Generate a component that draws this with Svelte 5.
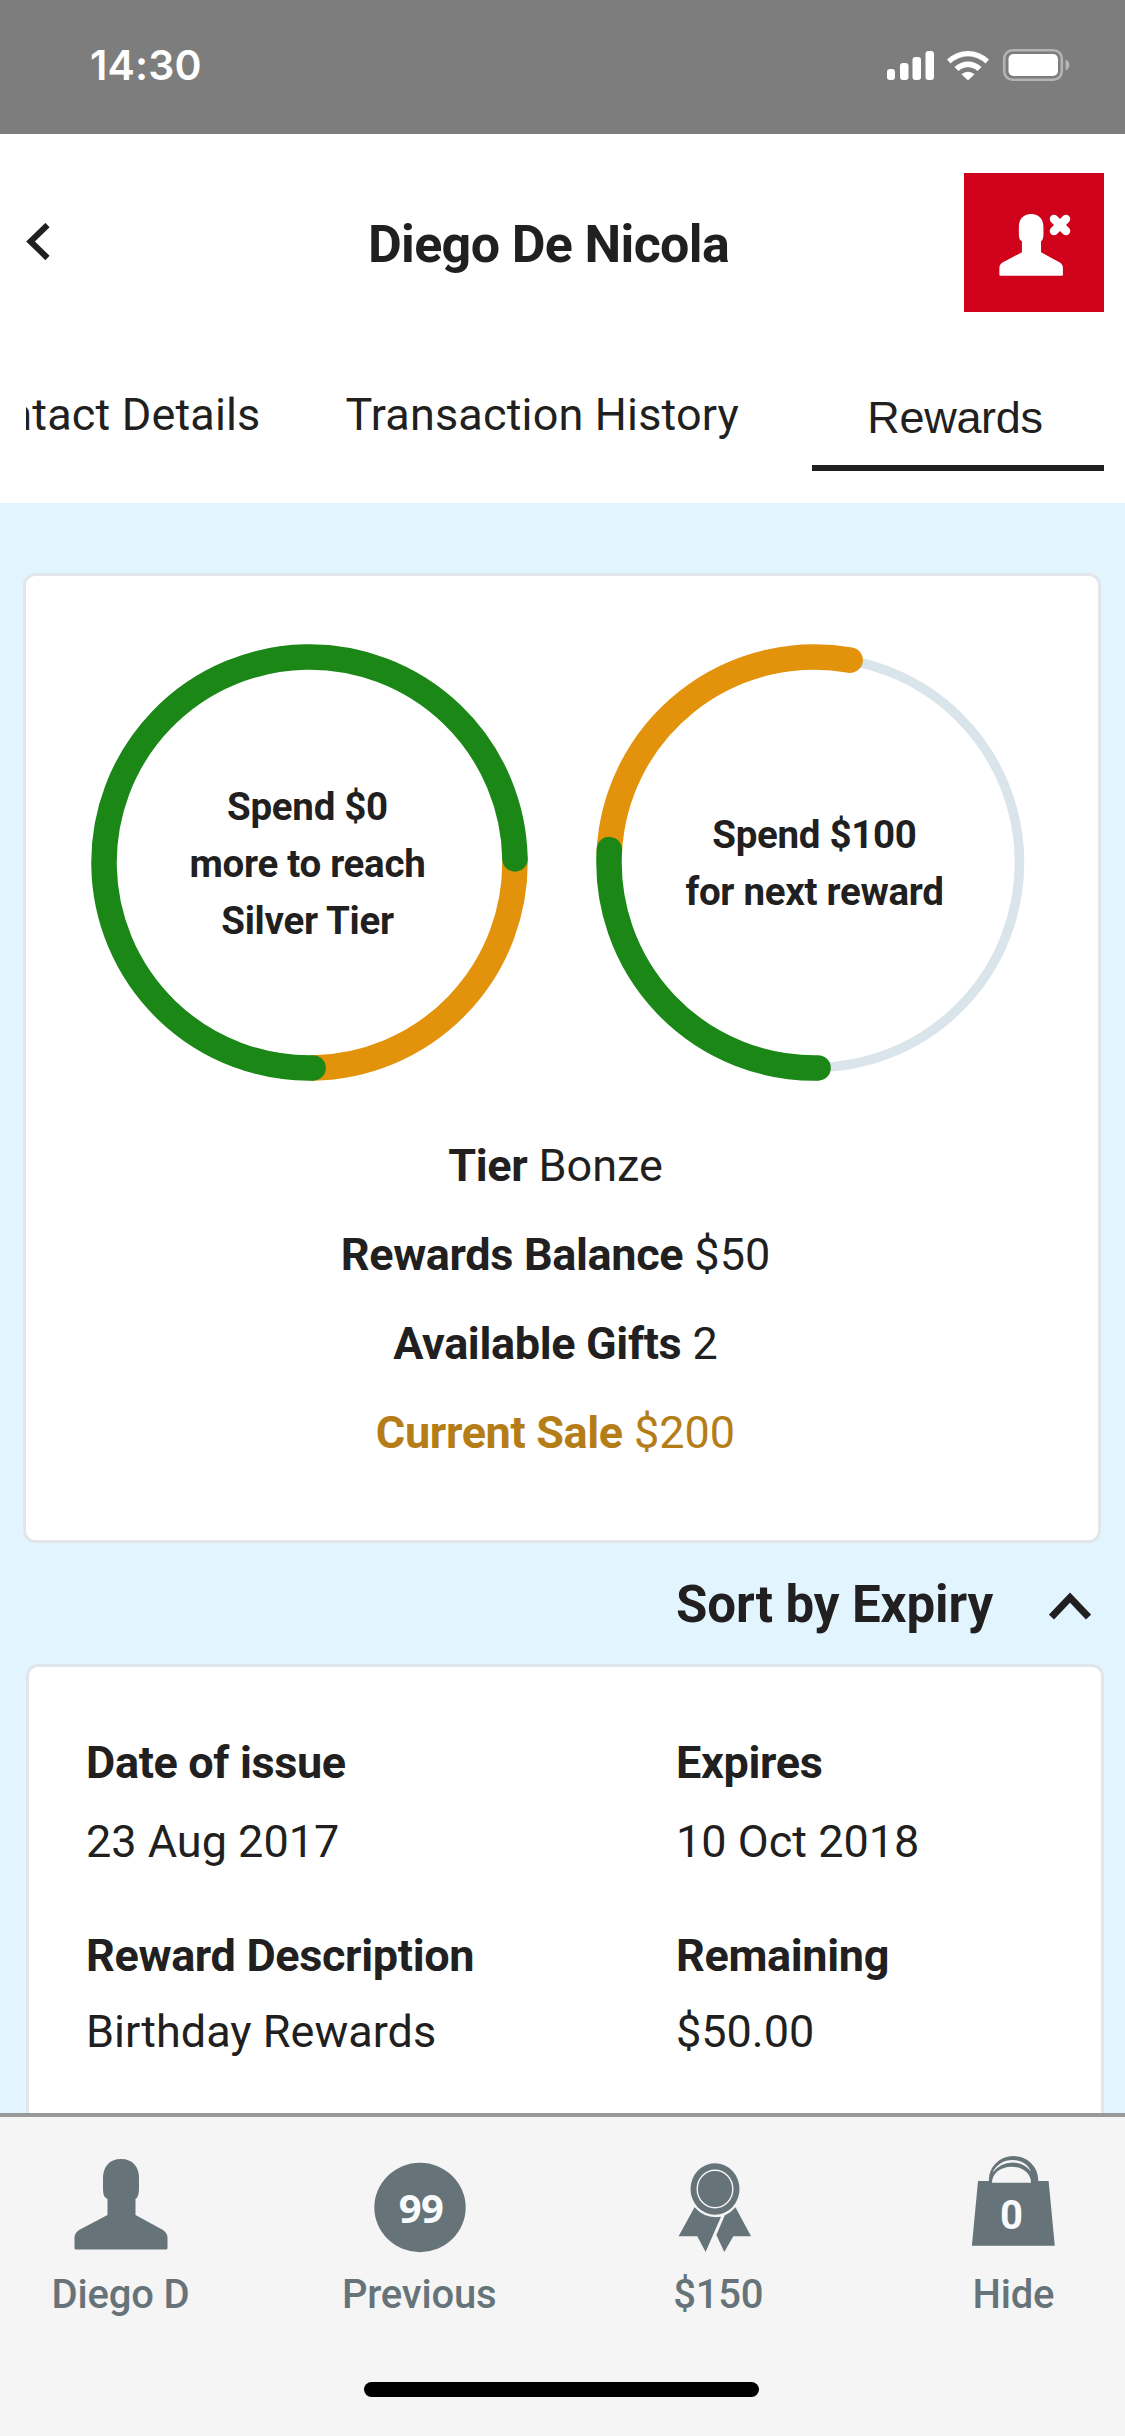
<script lang="ts">
	const tabs = ['Contact Details', 'Transaction History', 'Rewards'];
	let active = $state('Rewards');
	let ascending = $state(true);

	// arcs are drawn clockwise, angles in degrees, 0 = top
	const R = 205.5;
	const C = 218.5;
	function arc(from: number, to: number) {
		const point = (deg: number) => {
			const a = (deg * Math.PI) / 180;
			return `${(C + R * Math.sin(a)).toFixed(2)} ${(C - R * Math.cos(a)).toFixed(2)}`;
		};
		return `M${point(from)}A${R} ${R} 0 ${to - from > 180 ? 1 : 0} 1 ${point(to)}`;
	}

	const charts = [
		{
			lines: ['Spend $0', 'more to reach', 'Silver Tier'],
			sale: arc(89, 179),
			spent: arc(179, 449)
		},
		{
			lines: ['Spend $100', 'for next reward'],
			sale: arc(273, 370),
			spent: arc(179, 273.6)
		}
	];

	const stats = [
		{ label: 'Tier', value: 'Bonze' },
		{ label: 'Rewards Balance', value: '$50' },
		{ label: 'Available Gifts', value: '2' },
		{ label: 'Current Sale', value: '$200', sale: true }
	];

	const reward = [
		{ label: 'Date of issue', value: '23 Aug 2017' },
		{ label: 'Expires', value: '10 Oct 2018' },
		{ label: 'Reward Description', value: 'Birthday Rewards' },
		{ label: 'Remaining', value: '$50.00' }
	];
</script>

{#snippet person()}
	<path d="M50 3C62 3 68 11 68 22V32C68 38 67 41.500 64.500 43V59L92 74Q96.500 77 96.500 82V92Q96.500 93.500 95 93.500H5Q3.500 93.500 3.500 92V82Q3.500 77 8 74L36.500 59V43C33 41.500 32 38 32 32V22C32 11 38 3 50 3Z" />
{/snippet}

<div class="screen">
	<div class="status">
		<span class="time">14:30</span>
		<svg width="184" height="34" viewBox="0 0 184 34" fill="#fff">
			<rect x="1" y="21" width="8" height="11" rx="3" />
			<rect x="14" y="15" width="8.500" height="17" rx="3" />
			<rect x="26.500" y="9" width="8.500" height="23" rx="3" />
			<rect x="39.500" y="3" width="8.500" height="29" rx="3" />
			<path d="M61 11.500A30 30 0 0 1 103 11.500L99.500 15.500A25 25 0 0 0 64.500 15.500Z" />
			<path d="M68.500 19A19.500 19.500 0 0 1 95.500 19L91.500 23A14 14 0 0 0 72.500 23Z" />
			<path d="M75.500 26.200A9.500 9.500 0 0 1 88.500 26.200L82 32.500Z" />
			<rect x="118.200" y="2.200" width="57.600" height="29.600" rx="8.500" fill="none" stroke="#b4b4b4" stroke-width="2.600" />
			<rect x="122.500" y="6" width="49.500" height="22" rx="5" />
			<path d="M179.500 11.500Q183.500 13 183.500 17T179.500 22.500Z" fill="#b4b4b4" />
		</svg>
	</div>

	<header>
		<button class="back" aria-label="Back">
			<svg width="26" height="40" viewBox="0 0 26 40" fill="none" stroke="#221f20" stroke-width="6">
				<path d="M21.500 2L4.500 18.500L21.500 35" />
			</svg>
		</button>
		<h1>Diego De Nicola</h1>
		<button class="remove" aria-label="Remove customer">
			<svg width="76" height="66" viewBox="0 0 76 66" fill="#fff">
				<g transform="scale(.683)">{@render person()}</g>
				<path d="M57 7L69 19M69 7L57 19" stroke="#fff" stroke-width="8.500" stroke-linecap="round" />
			</svg>
		</button>
	</header>

	<nav>
		{#each tabs as tab}
			<button class:active={tab === active} onclick={() => (active = tab)}>{tab}</button>
		{/each}
	</nav>

	<main>
		<section class="card summary">
			<div class="charts">
				{#each charts as chart, i}
					<div class="chart">
						<svg width="437" height="437" viewBox="0 0 437 437" fill="none" stroke-linecap="round">
							{#if i > 0}
								<circle cx={C} cy={C} r="205" stroke="#d9e4eb" stroke-width="9.500" />
							{/if}
							<path d={chart.sale} stroke="#e3920b" stroke-width="25.500" />
							<path d={chart.spent} stroke="#1a8717" stroke-width="25.500" />
						</svg>
						<p>
							{#each chart.lines as line}
								<span>{line}</span>
							{/each}
						</p>
					</div>
				{/each}
			</div>
			<div class="stats">
				{#each stats as stat}
					<div class:sale={stat.sale}><b>{stat.label}</b> {stat.value}</div>
				{/each}
			</div>
		</section>

		<button class="sort" onclick={() => (ascending = !ascending)}>
			Sort by Expiry
			<svg class:flipped={!ascending} width="42" height="30" viewBox="0 0 42 30" fill="none" stroke="#221f20" stroke-width="7">
				<path d="M2.500 27L21 7.500L39.500 27" />
			</svg>
		</button>

		<section class="card reward">
			{#each reward as field}
				<div class="field">
					<b>{field.label}</b>
					<span>{field.value}</span>
				</div>
			{/each}
		</section>
	</main>

	<footer>
		<div class="actions">
			<button>
				<svg width="100" height="100" viewBox="0 0 100 100">{@render person()}</svg>
				Diego D
			</button>
			<button>
				<svg width="100" height="100" viewBox="0 0 100 100">
					<ellipse cx="51" cy="51.500" rx="45.700" ry="44.700" />
					<text class="count" x="52" y="67">99</text>
				</svg>
				Previous
			</button>
			<button>
				<svg width="100" height="100" viewBox="0 0 100 100">
					<ellipse cx="47" cy="33" rx="24.500" ry="25.800" />
					<ellipse cx="47" cy="33" rx="17.800" ry="18.800" fill="none" stroke="#f5f5f5" stroke-width="1.400" />
					<path d="M26.500 51.300A29.500 29.500 0 0 0 53 60.700L37.600 96L29.300 80.300H10.600Z" />
					<path d="M67.500 51.300A29.500 29.500 0 0 1 56.700 59.500L48.400 79L56.300 96L65.300 80.300H83Z" />
				</svg>
				$150
			</button>
			<button>
				<svg width="100" height="100" viewBox="-1 0 100 100">
					<path d="M14 25H24.800V24A24.700 24 0 0 1 74.200 24V25H84.600L90.800 89.700H7.900Z" />
					<path d="M28 26.700C28 17 37 10.700 47.500 10.700S67 17 67 26.700Z" fill="#f5f5f5" />
					<path d="M28.500 16.500Q35 4 48.500 4T67.500 16Q60 6.500 48.500 6.500T28.500 16.500Z" fill="#f5f5f5" />
					<text class="items" x="47.500" y="73">0</text>
				</svg>
				Hide
			</button>
		</div>
		<div class="home"></div>
	</footer>
</div>

<style>
	:global(body) {
		margin: 0;
	}
	.screen {
		width: 1125px;
		height: 2436px;
		overflow: hidden;
		display: flex;
		flex-direction: column;
		background: #fff;
		color: #221f20;
		font-family: Roboto, sans-serif;
		font-size: 45px;
	}
	button {
		all: unset;
		box-sizing: border-box;
		cursor: pointer;
	}
	svg {
		display: block;
	}
	b {
		letter-spacing: -0.35px;
	}

	.status {
		flex: none;
		height: 134px;
		box-sizing: border-box;
		padding: 0 55px 4px 90px;
		display: flex;
		align-items: center;
		justify-content: space-between;
		background: #7d7d7d;
	}
	.time {
		color: #fff;
		font: 600 41px/50px Inter, sans-serif;
		letter-spacing: 0.2px;
	}

	header {
		flex: none;
		height: 217px;
		padding: 0 21px 0 26px;
		display: grid;
		grid-template-columns: 107px 1fr 140px;
		align-items: center;
	}
	h1 {
		margin: 0;
		padding-top: 4px;
		font-size: 52px;
		line-height: 60px;
		font-weight: 700;
		letter-spacing: -0.65px;
		text-align: center;
	}
	.remove {
		height: 139px;
		padding: 4px 0 0 1px;
		display: flex;
		align-items: center;
		justify-content: center;
		background: #d0021b;
	}

	nav {
		flex: none;
		height: 120px;
		margin: 0 21px 32px 26px;
		overflow: hidden;
		display: flex;
		align-items: flex-start;
		justify-content: flex-end;
	}
	nav button {
		flex: none;
		padding-top: 34px;
		line-height: 60px;
		white-space: nowrap;
		margin-right: 85px;
		letter-spacing: 0.15px;
	}
	nav button:nth-last-child(2) {
		margin-right: 73px;
	}
	nav button.active {
		width: 292px;
		height: 120px;
		margin: 0;
		padding: 37px 6px 17px 0;
		border-bottom: 6px solid #221f20;
		font-family: "Liberation Sans", sans-serif;
		letter-spacing: -0.3px;
		text-align: center;
	}

	main {
		height: 1610px;
		overflow: hidden;
		display: flex;
		flex-direction: column;
		background: #e2f5ff;
	}
	.card {
		flex: none;
		box-sizing: border-box;
		border: 3px solid #e1e6ea;
		border-radius: 12px;
		background: #fff;
	}
	.summary {
		margin: 70px 24px 0 23px;
		height: 970px;
		padding-top: 68px;
	}
	.charts {
		display: flex;
		gap: 68px;
		padding-left: 65px;
	}
	.chart {
		display: grid;
	}
	.chart svg,
	.chart p {
		grid-area: 1 / 1;
	}
	.chart p {
		margin: 0;
		padding-top: 1px;
		display: flex;
		flex-direction: column;
		align-items: center;
		justify-content: center;
		font-size: 38.5px;
		line-height: 57px;
		font-weight: 700;
		letter-spacing: -0.3px;
	}
	.chart:first-child p {
		padding-right: 4px;
	}
	.stats {
		margin: 40px 13px 0 0;
		line-height: 89px;
		text-align: center;
	}
	.sale {
		color: #b57d17;
	}

	.sort {
		flex: none;
		height: 121px;
		padding: 2px 34px 0 0;
		display: flex;
		align-items: center;
		justify-content: flex-end;
		gap: 56px;
		font-size: 51px;
		font-weight: 700;
		letter-spacing: -0.1px;
	}
	.flipped {
		transform: rotate(180deg);
	}

	.reward {
		height: 600px;
		margin: 0 21px 0 26px;
		padding: 66px 57px;
		display: grid;
		grid-template-columns: 590px 1fr;
		align-content: start;
		row-gap: 54px;
		line-height: 60px;
	}
	.field {
		display: flex;
		flex-direction: column;
		gap: 19px;
	}
	.field:nth-child(n + 3) {
		gap: 16px;
	}

	footer {
		flex: none;
		height: 323px;
		box-sizing: border-box;
		border-top: 4px solid #999;
		background: #f5f5f5;
	}
	.actions {
		display: flex;
		justify-content: space-between;
		padding: 39px 36px 0 45px;
	}
	.actions button {
		width: 151px;
		display: flex;
		flex-direction: column;
		align-items: center;
		gap: 14px;
		color: #66747a;
		font-size: 40px;
		line-height: 50px;
		font-weight: 500;
		letter-spacing: -0.2px;
	}
	.actions button:nth-child(2) {
		padding-left: 2px;
	}
	.actions button:nth-child(3) {
		padding-left: 5px;
	}
	.actions svg {
		fill: #66747a;
	}
	.actions text {
		fill: #f9fbfc;
		font-size: 40px;
		font-weight: 700;
		letter-spacing: 0;
		text-anchor: middle;
	}
	.actions .count {
		font-family: "Open Sans", sans-serif;
		letter-spacing: -0.5px;
	}
	.home {
		width: 395px;
		height: 15px;
		margin: 62px auto 0 364px;
		border-radius: 8px;
		background: #000;
	}
</style>
